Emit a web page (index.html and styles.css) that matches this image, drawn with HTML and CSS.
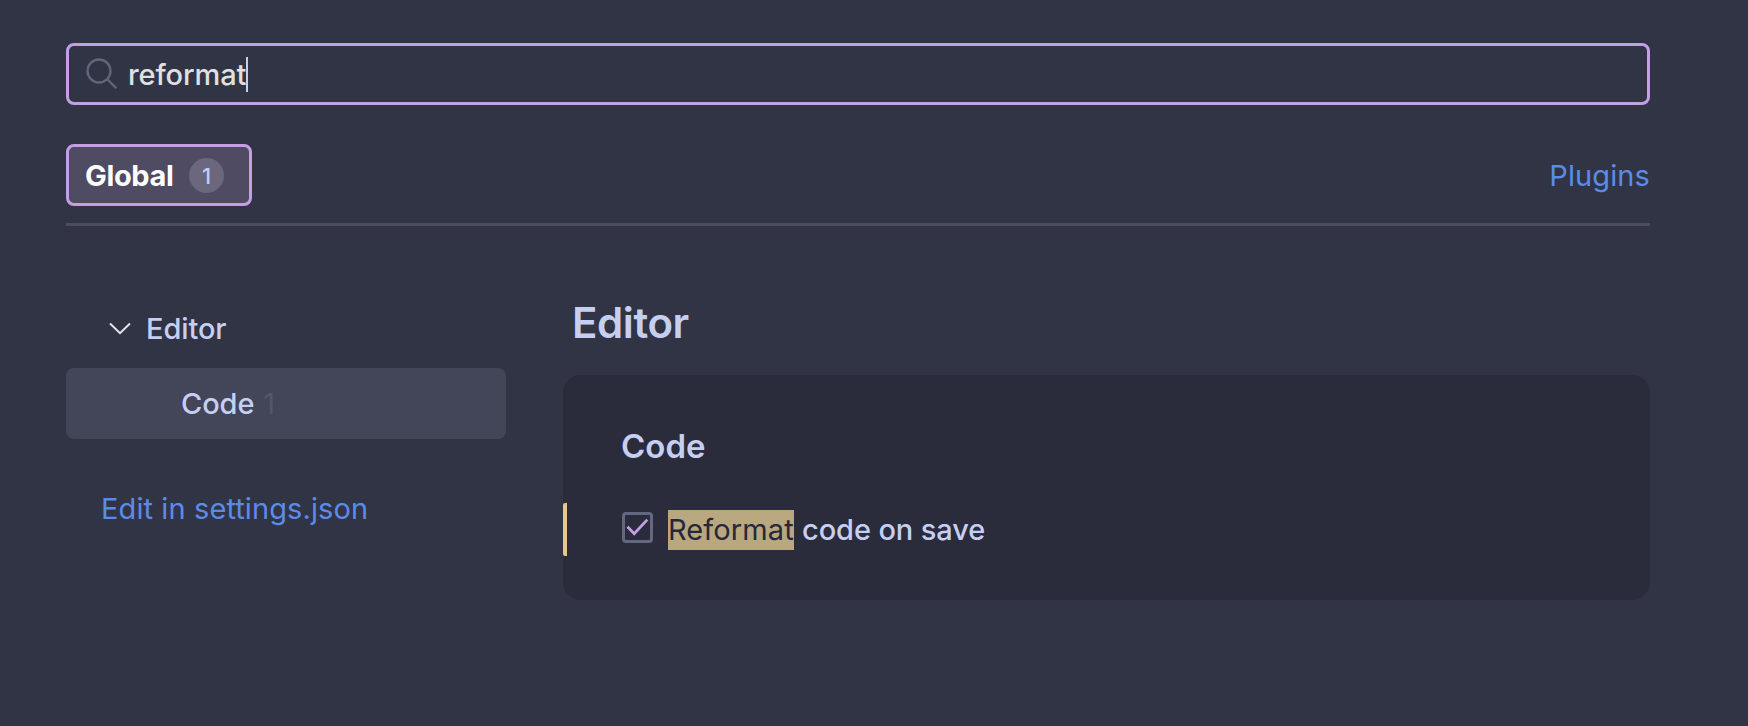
FILE: index.html
```html
<!DOCTYPE html>
<html lang="en">
<head>
<meta charset="utf-8">
<title>Settings</title>
<link rel="stylesheet" href="styles.css">
</head>
<body>
<main class="settings">
  <div class="search">
    <svg class="search-icon" width="32" height="32" viewBox="0 0 32 32"><circle cx="13" cy="13" r="11.5"/><path d="M21.3 21.3 30.3 30.3"/></svg>
    <span class="search-text">reformat</span><span class="caret"></span>
  </div>
  <header class="tabs">
    <button class="tab"><span class="tab-label">Global</span><span class="badge">1</span></button>
    <a class="link plugins">Plugins</a>
  </header>
  <div class="columns">
    <nav class="sidebar">
      <div class="group">
        <svg class="chevron" width="22" height="13" viewBox="0 0 22 13"><path d="M1 1.5 11 11.2 21 1.5"/></svg>
        <span class="group-label">Editor</span>
      </div>
      <div class="item"><span class="item-label">Code</span><span class="count">1</span></div>
      <a class="link edit-link">Edit in settings.json</a>
    </nav>
    <section class="content">
      <h1 class="title">Editor</h1>
      <div class="panel">
        <h2 class="section">Code</h2>
        <div class="option">
          <span class="checkbox"><svg width="23" height="19" viewBox="0 0 23 19"><path d="M1.5 8.8 8.2 15.7 21.3 1.6"/></svg></span>
          <mark class="match">Reformat</mark>
          <span class="option-label">code on save</span>
        </div>
      </div>
    </section>
  </div>
</main>
</body>
</html>
```
FILE: styles.css
```css
* { box-sizing: border-box; }
body {
  margin: 0;
  background: #313445;
  color: #c6cff2;
  font: 500 29px/40px Inter, "Liberation Sans", sans-serif;
  letter-spacing: -.1px;
  white-space: nowrap;
}
svg { display: block; flex: none; fill: none; }
.settings { height: 726px; padding: 43px 98px 0 66px; }
.search {
  display: flex;
  align-items: center;
  height: 62px;
  padding-left: 17px;
  border: 3px solid #c49fe5;
  border-radius: 8px;
}
.search-icon { margin-right: 10px; stroke: #62657c; stroke-width: 2.3; }
.search-text { width: 118px; padding-top: 2px; color: #dfe0e2; }
.caret { width: 2px; height: 35px; background: #c6d0f5; }
.tabs {
  display: flex;
  align-items: flex-start;
  justify-content: space-between;
  height: 82px;
  margin-top: 39px;
  border-bottom: 3px solid #4d4c60;
}
.tab {
  display: flex;
  align-items: center;
  justify-content: space-between;
  width: 186px;
  height: 62px;
  padding: 0 25px 0 16px;
  border: 3px solid #c49fe5;
  border-radius: 8px;
  background: #4e4b62;
  color: #fff;
  font: inherit;
}
.tab-label { padding-top: 2px; font-weight: 700; letter-spacing: -.35px; }
.badge {
  width: 35px;
  height: 35px;
  border-radius: 50%;
  background: #6b687d;
  color: #c3cdf5;
  font-size: 22px;
  line-height: 36px;
  text-align: center;
}
.link { color: #5c8be7; font-weight: 400; letter-spacing: .1px; }
.plugins { line-height: 64px; }
.columns { display: flex; gap: 57px; margin-top: 67px; }
.sidebar { width: 440px; }
.group { display: flex; align-items: center; height: 71px; padding-left: 43px; }
.chevron { margin-right: 15px; stroke: #e4e4e8; stroke-width: 2; }
.item {
  display: flex;
  align-items: center;
  height: 71px;
  margin-top: 4px;
  padding-left: 115px;
  border-radius: 8px;
  background: #434558;
}
.count { margin-left: 9px; color: #54576b; font-weight: 400; }
.edit-link { display: block; margin: 50px 0 0 35px; }
.content { flex: 1; }
.title { margin: 5px 0 27px 9px; font-size: 42px; line-height: 50px; font-weight: 600; letter-spacing: -.4px; }
.panel { height: 225px; padding-top: 51px; border-radius: 18px; background: #2a2b3b; }
.section { margin: 0 0 37px 58px; font-size: 33px; line-height: 40px; font-weight: 600; letter-spacing: 0; }
.option {
  display: flex;
  align-items: center;
  height: 53px;
  border-left: 4px solid #e4c890;
  border-radius: 2px;
  padding-left: 55px;
}
.checkbox {
  display: grid;
  place-items: center;
  width: 31px;
  height: 31px;
  margin: 0 15px 4px 0;
  border: 3px solid #626880;
  border-radius: 4px;
}
.checkbox svg { stroke: #c49fe5; stroke-width: 2.8; }
.match { width: 126px; background: #b9a780; color: #26283a; font-weight: 400; letter-spacing: .1px; }
.option-label { margin-left: 8px; }
```
